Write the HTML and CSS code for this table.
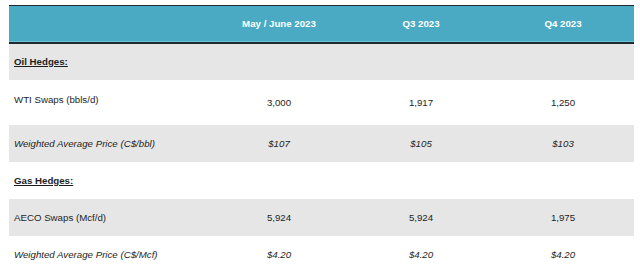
FILE: index.html
```html
<!DOCTYPE html>
<html>
<head>
<meta charset="utf-8">
<link rel="stylesheet" href="styles.css">
</head>
<body>
<table class="hedges">
  <thead>
    <tr>
      <th class="label"></th>
      <th>May / June 2023</th>
      <th>Q3 2023</th>
      <th>Q4 2023</th>
    </tr>
  </thead>
  <tbody>
    <tr class="shade section">
      <td class="label"><span class="title">Oil Hedges:</span></td>
      <td></td><td></td><td></td>
    </tr>
    <tr class="tall">
      <td class="label top">WTI Swaps (bbls/d)</td>
      <td>3,000</td><td>1,917</td><td>1,250</td>
    </tr>
    <tr class="shade italic">
      <td class="label">Weighted Average Price (C$/bbl)</td>
      <td>$107</td><td>$105</td><td>$103</td>
    </tr>
    <tr class="section">
      <td class="label"><span class="title">Gas Hedges:</span></td>
      <td></td><td></td><td></td>
    </tr>
    <tr class="shade">
      <td class="label">AECO Swaps (Mcf/d)</td>
      <td>5,924</td><td>5,924</td><td>1,975</td>
    </tr>
    <tr class="italic">
      <td class="label">Weighted Average Price (C$/Mcf)</td>
      <td>$4.20</td><td>$4.20</td><td>$4.20</td>
    </tr>
  </tbody>
</table>
</body>
</html>
```
FILE: styles.css
```css
html, body {
  margin: 0;
  padding: 0;
  background: #ffffff;
}
body {
  padding: 5px 6px 0 9px;
  font-family: "Liberation Sans", Arial, sans-serif;
  font-size: 9.7px;
  color: #1e1e1e;
}
.hedges {
  width: 625px;
  border-collapse: collapse;
  table-layout: fixed;
}
.hedges th, .hedges td {
  box-sizing: border-box;
  padding: 0;
  text-align: center;
  vertical-align: middle;
}
.hedges th.label, .hedges td.label {
  width: 199px;
  text-align: left;
  padding-left: 5px;
}
.hedges th:not(.label), .hedges td:not(.label) {
  width: 142px;
}
.hedges thead tr {
  background: #4aaac4;
  height: 37px;
  border-top: 1px solid #1d2a2e;
  border-bottom: 2px solid #1d2a2e;
  box-shadow: inset 0 -2px 0 #6cc0d6;
}
.hedges thead th {
  color: #ffffff;
  font-weight: bold;
}
.hedges tbody tr {
  height: 37px;
}
.hedges tbody tr.tall {
  height: 45px;
}
.hedges tr.shade {
  background: #e6e6e6;
}
.hedges td.top {
  vertical-align: top;
  padding-top: 14px;
}
.hedges tr.italic td {
  font-style: italic;
}
.title {
  font-weight: bold;
  text-decoration: underline;
}
```
